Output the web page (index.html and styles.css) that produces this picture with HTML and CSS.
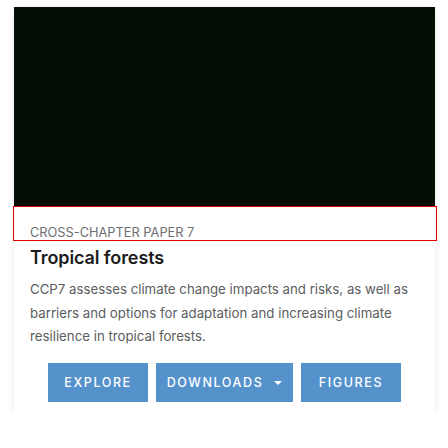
FILE: index.html
```html
<!DOCTYPE html>
<html>
<head>
<meta charset="utf-8">
<link rel="stylesheet" href="styles.css">
</head>
<body>
<div class="card">
  <div class="media"></div>
  <div class="pretitle">CROSS-CHAPTER PAPER 7</div>
  <div class="body">
    <h2 class="title">Tropical forests</h2>
    <p class="desc">CCP7 assesses climate change impacts and risks, as well as barriers and options for adaptation and increasing climate resilience in tropical forests.</p>
    <div class="actions">
      <a class="btn btn-explore">EXPLORE</a>
      <a class="btn btn-downloads">DOWNLOADS<span class="caret"></span></a>
      <a class="btn btn-figures">FIGURES</a>
    </div>
  </div>
</div>
</body>
</html>
```
FILE: styles.css
```css
html, body { margin: 0; padding: 0; background: #fff; }
body { padding: 7px 13px 0 14px; font-family: Inter, "Liberation Sans", sans-serif; }
.card {
  width: 421px;
  background: #fff;
  box-shadow: 0 0 8px rgba(0,0,0,0.08);
  padding-bottom: 11px;
}
.media { height: 200px; background: #040e04; }
.pretitle {
  outline: 1px solid #e00000;
  margin-right: -1px;
  height: 33px;
  box-sizing: border-box;
  padding: 19px 16px 0;
  font-size: 12.8px;
  line-height: 14px;
  color: #6c6f73;
  letter-spacing: 0;
}
.body { padding: 0 16px; }
.title {
  margin: 7px 0 0;
  font-size: 18px;
  line-height: 22px;
  font-weight: 600;
  color: #1c1c1c;
  letter-spacing: -0.1px;
}
.desc {
  margin: 9px 0 0;
  font-size: 13.25px;
  line-height: 23.7px;
  color: #5a5d60;
  letter-spacing: 0;
}
.actions {
  display: flex;
  justify-content: center;
  gap: 8px;
  margin-top: 14px;
}
.btn {
  display: flex;
  align-items: center;
  justify-content: center;
  height: 39px;
  background: #5592cc;
  color: #fff;
  font-size: 12.5px;
  font-weight: 500;
  letter-spacing: 1.6px;
}
.btn-explore, .btn-figures { width: 100px; }
.btn-downloads { width: 137px; }
.caret {
  display: inline-block;
  width: 0; height: 0;
  border-left: 4px solid transparent;
  border-right: 4px solid transparent;
  border-top: 4px solid #fff;
  margin-left: 11px;
}
```
